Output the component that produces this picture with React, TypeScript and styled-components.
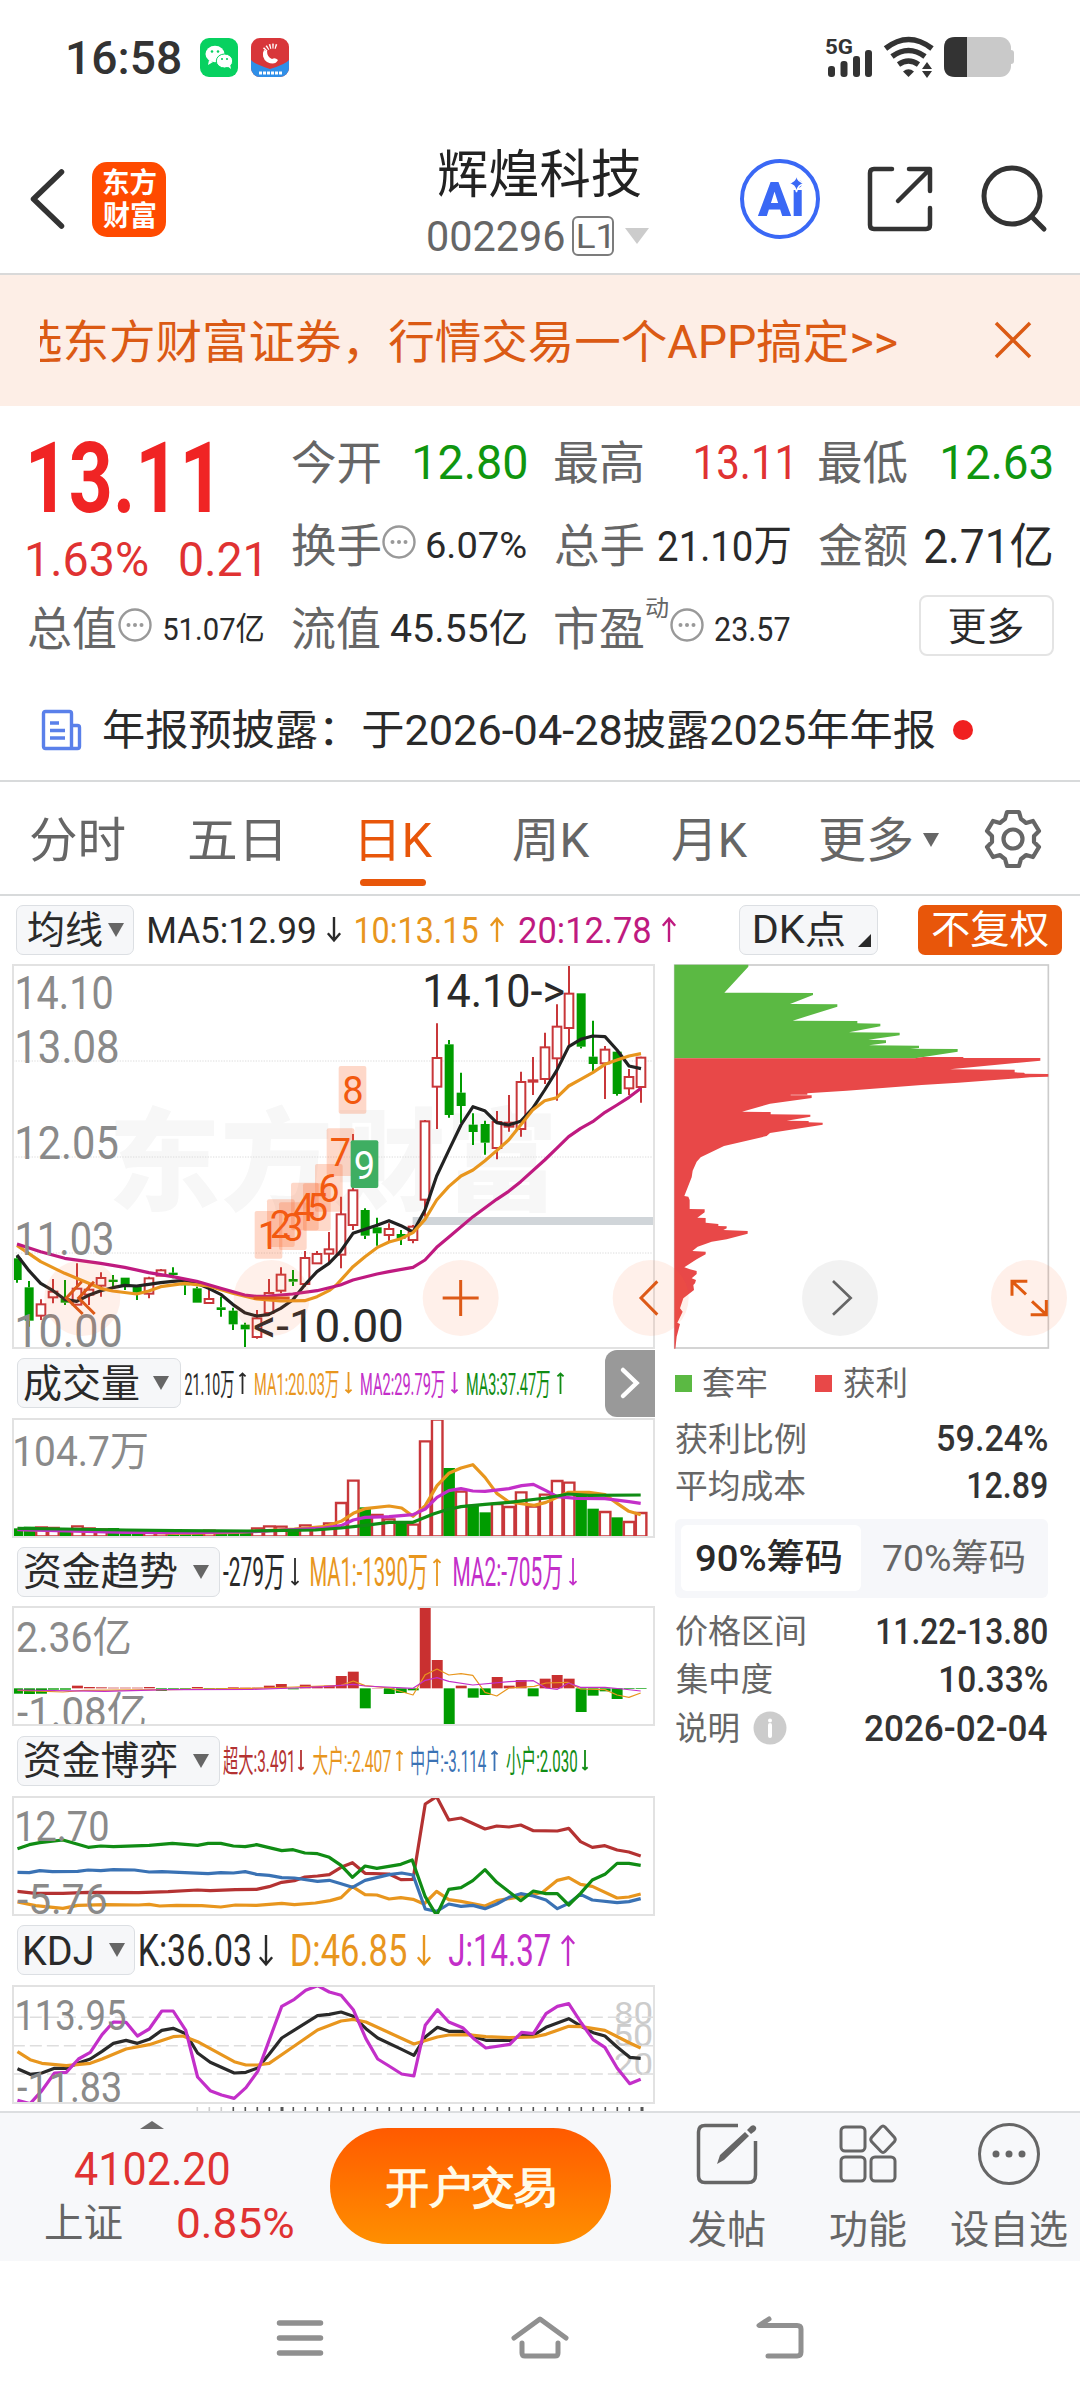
import React, { useLayoutEffect, useRef, useState } from 'react';
import styled, { createGlobalStyle } from 'styled-components';

const FONT = "Roboto, 'Noto Sans CJK SC', sans-serif";
const RED = '#c8373a';
const GREEN = '#009c00';
const ORANGE = '#e8961e';
const PURPLE = '#c32fc9';
const MAGENTA = '#bf1a80';
const INK = '#2a2a2a';
const GREY = '#666';

const Global = createGlobalStyle`
  * { box-sizing: border-box; }
  body { margin: 0; background: #fff; font-family: ${FONT}; }
  svg { display: block; flex: none; overflow: visible; }
`;

/* ---------- text set to a fixed ink width ---------- */
const FitBox = styled.span<{ $w: number; $size: number; $color: string; $weight: number; $ml: number }>`
  display: inline-block;
  flex: none;
  width: ${p => p.$w}px;
  margin-left: ${p => p.$ml}px;
  font-size: ${p => p.$size}px;
  line-height: 1.2;
  height: 1.2em;
  font-weight: ${p => p.$weight};
  color: ${p => p.$color};
  white-space: nowrap;
`;
const FitInner = styled.span`
  display: inline-block;
  transform-origin: 0 50%;
`;

type FitProps = { w: number; size: number; color?: string; weight?: number; ml?: number; children: string };
function Fit({ w, size, color = INK, weight = 400, ml = 0, children }: FitProps) {
  const ref = useRef<HTMLSpanElement>(null);
  const [fit, setFit] = useState({ scale: 1, left: 0 });
  useLayoutEffect(() => {
    const ctx = document.createElement('canvas').getContext('2d');
    if (!ctx || !ref.current) return;
    ctx.font = `${weight} ${size}px ${FONT}`;
    const m = ctx.measureText(children);
    const laidOut = parseFloat(getComputedStyle(ref.current).width) || m.width;
    const ink = m.actualBoundingBoxLeft + m.actualBoundingBoxRight + laidOut - m.width;
    const scale = w / ink;
    setFit({ scale, left: m.actualBoundingBoxLeft * scale });
  }, [w, size, weight, children]);
  return (
    <FitBox $w={w} $size={size} $color={color} $weight={weight} $ml={ml}>
      <FitInner ref={ref} style={{ transform: `translate(${fit.left}px, 1px) scaleX(${fit.scale})` }}>{children}</FitInner>
    </FitBox>
  );
}

/* ---------- page ---------- */
const Page = styled.div`
  width: 1080px;
  height: 2400px;
  display: flex;
  flex-direction: column;
  overflow: hidden;
  background: #fff;
`;

const StatusBar = styled.div`
  height: 115px;
  padding: 0 66px 0 68px;
  display: flex;
  align-items: center;
`;
const Spacer = styled.div`flex: 1;`;
const AppIcon = styled.div<{ $bg: string; $ml: number }>`
  width: 38px;
  height: 39px;
  margin-left: ${p => p.$ml}px;
  border-radius: 9px;
  background: ${p => p.$bg};
  overflow: hidden;
`;

const Header = styled.header`
  height: 158px;
  padding-left: 30px;
  display: flex;
  align-items: center;
`;
const BackIcon = styled.svg`margin-top: 11px;`;
const Logo = styled.div`
  width: 74px;
  height: 75px;
  margin: 11px 0 0 28px;
  border-radius: 15px;
  background: #ff4a00;
  display: flex;
  flex-direction: column;
  align-items: center;
  justify-content: center;
  gap: 0;
`;
const TitleBlock = styled.div`
  width: 222px;
  margin: 17px 0 0 262px;
  display: flex;
  flex-direction: column;
`;
const CodeRow = styled.div`
  display: flex;
  align-items: center;
  margin-top: 5px;
`;
const Level = styled.span`
  width: 42px;
  height: 40px;
  margin-left: 8px;
  border: 2px solid #7c7c7c;
  border-radius: 6px;
  display: flex;
  align-items: center;
  justify-content: center;
`;
const Down = styled.i<{ $w: number; $h: number; $c: string; $ml?: number }>`
  width: 0;
  height: 0;
  flex: none;
  margin-left: ${p => p.$ml ?? 0}px;
  border-left: ${p => p.$w / 2}px solid transparent;
  border-right: ${p => p.$w / 2}px solid transparent;
  border-top: ${p => p.$h}px solid ${p => p.$c};
`;
const Up = styled.i`
  width: 0;
  height: 0;
  margin-bottom: 12px;
  border-left: 12px solid transparent;
  border-right: 12px solid transparent;
  border-bottom: 8px solid #6c6c6c;
`;
const HeaderIcons = styled.div`
  display: flex;
  align-items: center;
  margin: 10px 0 0 90px;
`;
const AiBadge = styled.div`
  width: 80px;
  height: 80px;
  border: 4px solid #3a68f5;
  border-radius: 50%;
  display: flex;
  align-items: center;
  justify-content: center;
  position: relative;
`;
const Sparkle = styled.svg`
  position: absolute;
  right: 12px;
  top: 13px;
`;

const Banner = styled.div`
  height: 133px;
  border-top: 2px solid #d9d9d9;
  background: #fdeee6;
  padding: 0 49px 0 40px;
  display: flex;
  align-items: center;
  justify-content: space-between;
`;
const Marquee = styled.div`
  width: 860px;
  overflow: hidden;
  display: flex;
  justify-content: flex-end;
  padding: 2px 3px 0 0;
`;

const Quote = styled.section`
  height: 264px;
  padding: 15px 28px 0;
  display: grid;
  grid-template-columns: 264px 263px 264px 233px;
  grid-template-rows: repeat(3, 83px);
`;
const Price = styled.div`
  grid-row: span 2;
  display: flex;
  flex-direction: column;
`;
const PriceTop = styled.div`height: 113px; padding-left: 3px; display: flex; align-items: center;`;
const PriceSub = styled.div`height: 50px; display: flex; align-items: center;`;
const Cell = styled.div<{ $last?: boolean }>`
  padding-right: ${p => (p.$last ? 0 : 29)}px;
  display: flex;
  align-items: center;
  justify-content: space-between;
`;
const Lbl = styled.span`display: flex; align-items: center;`;
const Sup = styled.span`
  align-self: flex-start;
  margin-top: -7px;
  display: flex;
`;
const MoreButton = styled.button`
  width: 135px;
  height: 61px;
  margin: -5px -2px 0 auto;
  padding: 0;
  border: 2px solid #e4e4e4;
  border-radius: 8px;
  background: #fff;
  display: flex;
  align-items: center;
  justify-content: center;
`;
const DotsIcon = styled.svg`margin: 0 0 7px 2px;`;

const Notice = styled.div`
  height: 110px;
  padding: 10px 0 0 42px;
  display: flex;
  align-items: center;
`;
const RedDot = styled.i`
  width: 20px;
  height: 20px;
  margin-left: 18px;
  border-radius: 50%;
  background: #f02020;
`;

const Tabs = styled.nav`
  height: 116px;
  border-top: 2px solid #d8dadb;
  border-bottom: 2px solid #d8dadb;
  padding-left: 31px;
  display: flex;
  align-items: center;
`;
const Tab = styled.div<{ $ml: number; $on?: boolean }>`
  height: 100%;
  margin-left: ${p => p.$ml}px;
  display: flex;
  align-items: center;
  position: relative;
  padding-top: 4px;
  ${p => p.$on && `&::after { content: ''; position: absolute; left: -1px; bottom: 8px; width: 66px; height: 7px; border-radius: 4px; background: #e8560a; }`}
`;

const MaRow = styled.div`
  height: 68px;
  padding-left: 16px;
  display: flex;
  align-items: center;
`;
const Chip = styled.div<{ $w: number; $pl: number; $ml?: number }>`
  width: ${p => p.$w}px;
  height: 50px;
  flex: none;
  margin-left: ${p => p.$ml ?? 0}px;
  padding-left: ${p => p.$pl}px;
  border: 1px solid #dcdfe3;
  border-radius: 7px;
  background: #f6f7f9;
  display: flex;
  align-items: center;
`;
const Corner = styled.i`
  width: 0;
  height: 0;
  margin: 22px 0 0 13px;
  border-left: 13px solid transparent;
  border-bottom: 13px solid ${INK};
`;
const Adjust = styled.div`
  width: 144px;
  height: 50px;
  margin-left: 40px;
  border-radius: 7px;
  background: #e8560a;
  display: flex;
  align-items: center;
  justify-content: center;
`;

const Main = styled.main`
  height: 1148px;
  display: flex;
  padding-left: 12px;
`;
const Left = styled.div`width: 643px; display: flex; flex-direction: column;`;
const Right = styled.div`width: 375px; margin-left: 19px; display: flex; flex-direction: column;`;

const Panel = styled.div<{ $h: number }>`
  height: ${p => p.$h}px;
  border: 2px solid #e2e2e2;
  position: relative;
  overflow: hidden;
`;
const Plot = styled.svg`
  position: absolute;
  left: -2px;
  top: -2px;
`;
const Mark = styled.div<{ $x: number; $y: number }>`
  position: absolute;
  left: ${p => p.$x}px;
  top: ${p => p.$y}px;
  display: flex;
`;
const Legend = styled.div<{ $h: number }>`
  height: ${p => p.$h}px;
  padding-left: 5px;
  display: flex;
  align-items: center;
  position: relative;
`;
const ExpandTab = styled.div`
  position: absolute;
  right: 0;
  top: 1px;
  width: 50px;
  height: 67px;
  border-radius: 12px 0 0 12px;
  background: #999;
  display: flex;
  align-items: center;
  justify-content: center;
`;

const KeyRow = styled.div`height: 69px; display: flex; align-items: center;`;
const Swatch = styled.i<{ $c: string; $ml?: number }>`
  width: 17px;
  height: 17px;
  margin-left: ${p => p.$ml ?? 0}px;
  background: ${p => p.$c};
`;
const Stat = styled.div<{ $h: number }>`
  height: ${p => p.$h}px;
  padding: 0 2px 0 2px;
  display: flex;
  align-items: center;
  justify-content: space-between;
`;
const Segment = styled.div`
  width: 373px;
  height: 79px;
  margin: 7px 0 10px 1px;
  padding: 6px;
  border-radius: 6px;
  background: #f6f7fa;
  display: flex;
`;
const SegItem = styled.div<{ $on?: boolean }>`
  width: 180px;
  height: 66px;
  padding: ${p => (p.$on ? '2px 6px 0 0' : '2px 0 0 4px')};
  border-radius: 6px;
  background: ${p => (p.$on ? '#fff' : 'transparent')};
  display: flex;
  align-items: center;
  justify-content: center;
`;

const Dock = styled.footer`
  height: 150px;
  border-top: 2px solid #dcdee0;
  background: #f7f8fa;
  display: flex;
`;
const IndexBox = styled.div`
  width: 330px;
  padding: 8px 0 0;
  display: flex;
  flex-direction: column;
`;
const IndexTop = styled.div`width: 304px; display: flex; flex-direction: column; align-items: center;`;
const IndexRow = styled.div`display: flex; align-items: center; padding-left: 46px; margin-top: 1px;`;
const Trade = styled.button`
  width: 281px;
  height: 116px;
  margin-top: 15px;
  padding: 3px 0 0;
  border: 0;
  border-radius: 58px;
  background: linear-gradient(#ff5a00, #ff8f00);
  display: flex;
  align-items: center;
  justify-content: center;
`;
const Action = styled.div<{ $w: number; $ml: number }>`
  width: ${p => p.$w}px;
  margin-left: ${p => p.$ml}px;
  padding-top: 10px;
  display: flex;
  flex-direction: column;
  align-items: center;
  gap: 21px;
`;
const SystemNav = styled.div`
  height: 139px;
  padding: 14px 0 0 277px;
  display: flex;
  align-items: center;
`;
const NavIcon = styled.svg<{ $ml: number }>`margin-left: ${p => p.$ml}px;`;

/* ---------- small drawings ---------- */
function Arrow({ up, w = 15, h = 25, c, ml }: { up?: boolean; w?: number; h?: number; c: string; ml: number }) {
  return (
    <svg width={w + ml} height={h} viewBox={`${-ml} 0 ${w + ml} ${h}`}>
      <g transform={up ? '' : `translate(0 ${h}) scale(1 -1)`} fill="none" stroke={c} strokeWidth={w < 10 ? 1.8 : 2.4}>
        <path d={`M${w / 2} ${h}V1M${w * 0.06} ${w * 0.62}L${w / 2} 1.5L${w * 0.94} ${w * 0.62}`} />
      </g>
    </svg>
  );
}
const Dots = () => (
  <DotsIcon width="34" height="34" viewBox="0 0 34 34">
    <circle cx="17" cy="17" r="15.5" fill="none" stroke="#999" strokeWidth="2.4" />
    {[10.5, 17, 23.5].map(x => <circle key={x} cx={x} cy="17" r="2" fill="#999" />)}
  </DotsIcon>
);

/* ---------- chart data ---------- */
type Candle = [string, number, number, number, number];
const candles: Candle[] = [
  ['g', 918, 925, 990, 998], ['g', 993, 1012, 1112, 1130], ['r', 1048, 1062, 1098, 1110], ['r', 987, 1024, 1043, 1060],
  ['g', 990, 1045, 1058, 1065], ['r', 940, 1015, 1065, 1065], ['r', 1000, 1018, 1035, 1065], ['r', 967, 983, 1008, 1040],
  ['g', 975, 989, 996, 1012], ['g', 983, 983, 1010, 1020], ['g', 1008, 1008, 1028, 1050], ['r', 980, 984, 1032, 1045],
  ['r', 957, 960, 978, 978], ['g', 952, 968, 975, 985], ['g', 1000, 1000, 1006, 1035], ['g', 1010, 1015, 1058, 1058],
  ['r', 1015, 1046, 1060, 1060], ['g', 1040, 1072, 1080, 1100], ['g', 1073, 1082, 1123, 1140], ['g', 1118, 1124, 1138, 1196],
  ['r', 1080, 1104, 1162, 1166], ['r', 987, 1028, 1090, 1098], ['r', 952, 973, 1023, 1030], ['g', 960, 987, 995, 1008],
  ['r', 903, 923, 1003, 1010], ['r', 903, 911, 941, 941], ['r', 846, 897, 912, 940], ['r', 740, 792, 915, 955],
  ['r', 552, 720, 826, 840], ['g', 775, 780, 857, 867], ['g', 803, 832, 850, 887], ['r', 820, 836, 856, 873],
  ['g', 840, 852, 866, 885], ['r', 825, 829, 871, 880], ['r', 510, 513, 750, 800], ['r', 220, 323, 411, 537],
  ['g', 270, 283, 495, 503], ['g', 368, 428, 468, 520], ['g', 490, 524, 546, 585], ['g', 512, 522, 578, 614],
  ['r', 483, 515, 595, 628], ['r', 435, 517, 531, 545], ['r', 365, 395, 538, 560], ['r', 321, 390, 396, 435],
  ['r', 248, 291, 388, 402], ['r', 163, 229, 326, 452], ['r', 44, 130, 235, 285], ['g', 130, 130, 290, 295],
  ['g', 212, 320, 342, 368], ['r', 288, 298, 341, 447], ['g', 305, 305, 432, 437], ['r', 357, 380, 416, 435], ['r', 320, 322, 412, 458],
];
const ma5 = '52,915 88,962 123,1000 160,1022 195,1048 231,1054 267,1036 303,1022 339,1013 375,1006 411,1008 447,1003 483,998 519,994 555,991 591,1000 627,1015 663,1033 699,1063 735,1088 771,1098 806,1094 843,1075 879,1050 915,1005 952,965 988,940 1022,905 1060,850 1096,838 1132,826 1168,812 1204,827 1240,846 1276,780 1311,678 1347,602 1384,525 1420,470 1455,482 1491,518 1527,525 1563,514 1599,475 1635,420 1671,362 1707,290 1743,268 1779,258 1816,260 1852,300 1888,348 1924,356';
const ma10 = '52,886 123,935 195,970 267,1000 303,1015 339,1023 411,1032 447,1023 483,1010 555,1000 627,1008 699,1030 771,1047 843,1053 915,1052 952,1040 988,1022 1010,1005 1022,992 1060,950 1096,920 1132,893 1168,876 1204,866 1240,848 1276,808 1311,750 1347,710 1384,678 1420,660 1455,633 1491,602 1527,570 1563,525 1599,480 1635,452 1671,443 1707,408 1743,388 1779,368 1816,343 1852,330 1888,318 1924,311';
const ma20 = '52,882 123,905 195,925 303,940 375,952 447,968 519,980 591,994 663,1015 735,1035 771,1039 806,1038 879,1032 952,1022 1022,1005 1060,990 1132,972 1168,965 1240,952 1276,930 1311,892 1347,862 1420,800 1491,748 1527,724 1563,695 1635,630 1671,595 1707,560 1743,535 1779,515 1816,487 1852,465 1888,442 1924,415';
const counts: [string, number, number, number, number][] = [
  ['1', 765, 783, 806, 855], ['2', 802, 748, 842, 823], ['3', 838, 757, 880, 833], ['4', 874, 698, 913, 772],
  ['5', 910, 700, 953, 772], ['6', 946, 642, 988, 715], ['7', 981, 535, 1022, 608], ['8', 1017, 348, 1060, 420], ['9', 1053, 571, 1094, 645],
];
const volume = 'g533 g528 r530 r532 g540 r527 r533 r536 g532 g540 g540 r540 r540 g540 g545 g548 r540 g545 g545 g542 r533 r527 r528 g533 r524 r535 r518 r457 r390 g470 r493 r506 g512 r522 r272 r207 g352 r423 g462 g485 r460 r469 r425 r468 r432 r391 r396 g430 g474 r484 g500 r514 r487'.split(' ');
const flow = 'g342 g343 g342 g330 g330 r318 r322 r323 r324 r324 r324 r322 g334 g328 g328 r322 g331 g331 r323 r324 r324 r318 r313 g329 r315 r320 r318 r289 r276 g386 r325 g343 g340 g332 r81 r241 g437 r318 g354 g346 r292 r318 r301 g350 r297 r286 r297 g397 g348 g335 g358 g328 g328'.split(' ');
const volLines: [string, string][] = [
  [ORANGE, '42,536 300,543 420,548 560,545 700,535 770,528 811,512 840,488 868,474 925,466 955,472 982,497 1011,465 1039,405 1067,368 1096,352 1124,342 1153,380 1181,428 1210,454 1270,464 1298,455 1350,425 1400,425 1438,432 1467,458 1495,482 1523,492'],
  [PURPLE, '42,537 300,545 450,546 600,543 770,532 811,525 840,508 868,500 925,498 982,492 1011,475 1039,440 1067,420 1096,414 1124,421 1153,422 1210,414 1240,405 1268,401 1298,420 1325,438 1370,443 1438,444 1495,453 1523,458'],
  ['#108c14', '42,533 150,535 300,538 420,540 600,541 750,538 811,532 868,524 925,515 982,515 1030,490 1060,478 1096,468 1153,461 1210,455 1298,442 1350,430 1400,434 1523,433'],
];
const flowLines: [string, string][] = [
  [ORANGE, '42,332 150,337 200,332 400,330 600,326 700,322 811,317 840,304 868,318 925,325 982,346 1011,285 1039,268 1067,286 1096,282 1124,287 1153,338 1181,349 1210,325 1270,320 1298,310 1350,308 1380,328 1438,330 1467,346 1495,353 1523,340'],
  [PURPLE, '42,331 250,335 400,330 600,329 700,325 770,321 840,314 868,319 982,326 1011,302 1039,294 1067,305 1124,316 1210,306 1268,303 1298,325 1325,329 1352,310 1380,323 1438,323 1480,328 1523,334'],
];
const gameLines: [string, string][] = [
  ['#b43232', '42,452 85,458 150,458 210,455 330,456 400,453 470,448 500,450 560,447 610,446 640,438 670,425 700,420 725,409 755,406 783,402 811,380 838,366 868,398 925,400 953,417 982,416 1011,190 1038,168 1067,238 1096,232 1153,265 1181,256 1210,259 1238,253 1268,270 1325,271 1352,263 1380,303 1408,320 1438,315 1467,328 1495,334 1523,346'],
  [ORANGE, '42,484 85,495 150,503 185,494 250,492 330,493 355,491 380,496 420,494 480,495 525,499 560,493 610,494 670,488 700,492 750,487 785,480 811,471 838,438 868,462 896,463 925,475 953,471 982,476 1008,490 1038,452 1067,477 1096,482 1153,496 1181,480 1238,468 1290,455 1325,419 1352,411 1380,431 1408,437 1467,472 1495,469 1523,460'],
  ['#3a72b4', '42,395 70,396 95,390 125,393 185,392 210,388 240,390 270,387 320,388 355,394 385,393 495,399 525,396 555,397 583,393 610,401 640,404 670,411 700,412 755,422 783,419 811,429 838,440 868,419 925,402 955,397 982,403 1011,505 1038,512 1067,490 1096,497 1124,494 1153,504 1181,490 1210,470 1238,459 1268,466 1298,478 1325,504 1352,488 1380,461 1408,478 1467,486 1495,483 1523,474'],
  ['#108c14', '42,324 70,312 95,306 150,298 210,320 240,316 270,318 355,314 410,308 470,314 495,308 525,308 555,316 583,318 610,312 640,321 670,330 697,327 725,337 755,339 783,350 811,374 838,410 868,376 896,383 953,371 980,358 1011,468 1038,524 1067,446 1096,441 1124,420 1153,387 1181,425 1238,480 1268,451 1298,459 1325,459 1352,493 1380,458 1408,418 1438,401 1467,368 1495,368 1523,374'],
];
const kdjLines: [string, string][] = [
  [INK, '42,445 72,462 100,458 130,444 158,444 187,428 215,416 243,393 270,369 300,360 327,369 355,357 385,330 412,324 442,340 470,398 500,426 557,458 585,456 613,443 640,402 670,353 755,286 783,282 811,275 840,288 870,325 898,353 955,387 984,405 1011,350 1040,321 1067,333 1100,333 1128,350 1155,360 1212,360 1240,345 1268,345 1298,321 1352,295 1382,318 1410,337 1438,347 1467,380 1497,411 1523,414'],
  [ORANGE, '42,394 72,418 100,429 158,436 215,429 243,416 300,386 355,373 412,349 435,347 470,364 557,424 585,434 613,434 640,429 700,377 755,329 811,302 840,297 870,305 927,338 984,371 1040,350 1067,344 1110,343 1155,349 1210,352 1268,350 1298,342 1352,318 1382,319 1438,330 1497,368 1523,383'],
  [PURPLE, '42,540 72,550 100,511 130,458 158,456 187,416 215,396 243,343 270,305 300,306 327,347 355,326 385,272 412,272 442,330 470,470 500,511 527,524 557,534 585,502 613,453 640,360 670,258 700,237 727,210 755,196 783,215 811,225 840,268 870,355 898,416 925,437 955,461 984,467 1011,315 1040,268 1067,305 1100,322 1128,357 1155,383 1212,372 1240,336 1268,340 1298,280 1325,258 1352,250 1382,308 1410,358 1438,381 1467,443 1497,490 1523,477'],
];
const trapped = '43,44 265,44 265,50 193,128 459,129 459,135 390,162 532,163 532,170 398,212 592,213 592,220 661,221 661,229 567,247 719,248 719,256 625,269 678,271 678,279 627,286 777,287 777,294 750,296 893,297 893,305 790,321 765,325 43,325';
const profit = '43,325 765,325 790,321 910,321 910,324 1141,324 1141,332 870,358 1064,359 1064,367 1092,368 1095,371 1165,372 1165,380 1110,382 895,398 785,405 560,422 442,430 442,434 392,434 392,436 455,436 455,444 330,461 246,485 332,486 332,493 451,494 451,500 380,512 446,513 446,517 488,518 488,524 330,549 320,558 192,588 122,622 110,635 98,662 95,682 73,738 85,740 89,750 89,777 134,778 134,787 112,803 137,804 137,818 175,822 175,828 200,829 200,835 190,840 263,843 263,851 200,868 155,875 113,890 97,903 137,905 137,913 110,928 73,952 90,958 110,963 110,972 95,985 108,990 105,1000 100,1005 102,1020 70,1045 60,1075 68,1085 52,1118 60,1122 50,1160 46,1196 43,1196';

/* ---------- charts ---------- */
function CandleChart() {
  return (
    <Plot width="643" height="385" viewBox="37 42 1929 1155">
      <text x="325" y="755" fontSize="335" fontWeight="900" fill="#f7f7f7" textLength="1350" lengthAdjust="spacingAndGlyphs" fontFamily={FONT}>东方财富</text>
      {[333, 621, 909].map(y => <path key={y} d={`M40 ${y}H1963`} stroke="#dcdcdc" strokeWidth="3" strokeDasharray="4 4" />)}
      <rect x="1239" y="801" width="724" height="24" fill="#d0d5d9" />
      {candles.map(([k, h, t, b, l], i) => {
        const x = 52 + 36 * i;
        const up = k === 'r';
        return (
          <g key={i} stroke={up ? RED : GREEN} strokeWidth="6">
            <path d={`M${x} ${h}V${t}M${x} ${b}V${l}`} />
            {up
              ? <rect x={x - 13} y={t + 1} width="26" height={Math.max(2, b - t - 2)} fill="#fff" strokeWidth="6" />
              : <rect x={x - 13} y={t} width="27" height={b - t} fill={GREEN} stroke="none" />}
          </g>
        );
      })}
      <g fill="none" strokeWidth="9.5" strokeLinejoin="round">
        <polyline points={ma5} stroke="#222" />
        <polyline points={ma10} stroke={ORANGE} />
        <polyline points={ma20} stroke={MAGENTA} />
      </g>
      {counts.map(([n, x, y, cx, cy]) => (
        <g key={n}>
          <rect x={x} y={y} width="83" height="143" rx="6" fill={n === '9' ? '#3fae62' : 'rgba(250,100,40,.25)'} />
          <text x={cx} y={cy + 41} fontSize="114" textAnchor="middle" fill={n === '9' ? '#fff' : '#f2590f'} fontFamily={FONT}>{n}</text>
        </g>
      ))}
    </Plot>
  );
}

const Overlay = styled.svg`
  position: absolute;
  left: 0;
  top: 0;
  pointer-events: none;
`;
const ChartWrap = styled.div`position: relative; height: 385px;`;

function ChartControls() {
  return (
    <Overlay width="643" height="385" viewBox="37 42 1929 1155">
      {[248, 816, 1383, 1953].map(x => <circle key={x} cx={x} cy="1044" r="114" fill="rgba(255,110,50,.1)" />)}
      <g fill="none" stroke="#dd5a18" strokeWidth="9">
        <path d="M246 995L200 1044L249 1092M283 995L237 1044L285 1092" />
        <path d="M762 1044H870M1329 1044H1437M1383 990V1098M1973 994L1924 1044L1973 1094" />
      </g>
    </Overlay>
  );
}

function Lines({ data, w = 3.2 }: { data: [string, string][]; w?: number }) {
  return (
    <g fill="none" strokeWidth={w} strokeLinejoin="round">
      {data.map(([c, p]) => <polyline key={c} points={p} stroke={c} vectorEffect="non-scaling-stroke" />)}
    </g>
  );
}

function Ticks() {
  return (
    <svg width="643" height="7" viewBox="0 0 643 7">
      {Array.from({ length: 38 }, (_, k) => k + 15).map(i => (
        <rect key={i} x={4.5 + 12 * i} y="3" width={i === 22 || i === 52 ? 3 : 1.6} height="4" fill={i < 18 ? '#ccc' : '#555'} />
      ))}
    </svg>
  );
}

export default function App() {
  return (
    <Page>
      <Global />
      <StatusBar>
        <Fit w={112} size={46} weight={500} color="#333">16:58</Fit>
        <AppIcon $bg="#07d160" $ml={20}>
          <svg width="38" height="39" viewBox="0 0 38 39">
            <ellipse cx="15" cy="16" rx="9.5" ry="8.3" fill="#fff" /><path d="M9 22l-1 5 5-3z" fill="#fff" />
            <circle cx="12" cy="13.5" r="1.3" fill="#07d160" /><circle cx="18" cy="13.5" r="1.3" fill="#07d160" />
            <ellipse cx="24.5" cy="23" rx="8.2" ry="7" fill="#fff" stroke="#07d160" strokeWidth="1" /><path d="M27 28l4 3-1-5z" fill="#fff" />
            <circle cx="22" cy="21" r="1.1" fill="#07d160" /><circle cx="27" cy="21" r="1.1" fill="#07d160" />
          </svg>
        </AppIcon>
        <AppIcon $bg="#d8363a" $ml={13}>
          <svg width="38" height="39" viewBox="0 0 38 39">
            <path d="M0 22Q3 26 19 31Q35 26 38 22V39H0z" fill="#2f8fe8" />
            <path d="M13 12A9 9 0 0 0 16 24Q24 28 27 22Q24 19 21 21Q16 19 16 13z" fill="#fff" />
            <path d="M14 12A10 10 0 0 1 26 9" fill="none" stroke="#fff" strokeWidth="5" strokeDasharray="1.3 1.5" />
            <path d="M8 35H31" stroke="#fff" strokeWidth="3" strokeDasharray="3 1" />
          </svg>
        </AppIcon>
        <Spacer />
        <svg width="188" height="40" viewBox="826 37 188 40">
          <text x="825" y="53.5" fontSize="20" fontWeight="700" fill="#333" textLength="28" lengthAdjust="spacingAndGlyphs" fontFamily={FONT}>5G</text>
          <g fill="#333">
            <rect x="828" y="66" width="7" height="11" rx="3" /><rect x="840.5" y="61" width="7" height="16" rx="3" />
            <rect x="853" y="56" width="7" height="21" rx="3" /><rect x="865" y="50" width="7" height="27" rx="3" />
            <path d="M903 71.500Q908.500 67 914 71.500L908.500 77z" />
            <path d="M922 69L927 62L932 69zM922 71L927 78L932 71z" />
          </g>
          <g fill="none" stroke="#333" strokeWidth="5.500">
            <path d="M885.500 48.500Q908.500 30.500 932 48.500" /><path d="M892 56.500Q908.500 44.500 925 56.500" /><path d="M898.500 64.500Q908.500 57.500 918.500 64.500" />
          </g>
          <rect x="944" y="37" width="67" height="40" rx="11" fill="#c9c9c9" />
          <path d="M967 37H955Q944 37 944 48V66Q944 77 955 77H967z" fill="#333" />
          <path d="M1011 50Q1014 50 1014 53V61Q1014 64 1011 64z" fill="#c9c9c9" />
        </svg>
      </StatusBar>

      <Header>
        <BackIcon width="34" height="60" viewBox="0 0 34 60"><path d="M31.500 3L3.500 30L31.500 57" fill="none" stroke="#333" strokeWidth="5.500" strokeLinecap="round" strokeLinejoin="round" /></BackIcon>
        <Logo>
          <Fit w={53} size={28} weight={700} color="#fff">东方</Fit>
          <Fit w={53} size={28} weight={700} color="#fff">财富</Fit>
        </Logo>
        <TitleBlock>
          <Fit w={203} size={52} ml={10} color="#222">辉煌科技</Fit>
          <CodeRow>
            <Fit w={136} size={42} color={GREY}>002296</Fit>
            <Level><Fit w={31} size={33} color={GREY}>L1</Fit></Level>
            <Down $w={24} $h={16} $c="#ccc" $ml={11} />
          </CodeRow>
        </TitleBlock>
        <HeaderIcons>
          <AiBadge>
            <Fit w={46} size={49} weight={900} color="#3a68f5">Ai</Fit>
            <Sparkle width="15" height="15" viewBox="0 0 14 14"><path d="M7 -1Q8 6 15 7Q8 8 7 15Q6 8 -1 7Q6 6 7 -1z" fill="#3a68f5" stroke="#fff" strokeWidth="1.2" /></Sparkle>
          </AiBadge>
          <NavIcon $ml={47} width="66" height="66" viewBox="0 0 66 66">
            <g fill="none" stroke="#333" strokeWidth="4.500" strokeLinecap="round" strokeLinejoin="round">
              <path d="M25 3H7Q3 3 3 7V59Q3 63 7 63H59Q63 63 63 59V42M42 3H63V25M62 4L31 35" />
            </g>
          </NavIcon>
          <NavIcon $ml={49} width="66" height="68" viewBox="0 0 66 68">
            <g fill="none" stroke="#333" strokeWidth="5" strokeLinecap="round"><circle cx="30" cy="31" r="28" /><path d="M50 52L62 64" /></g>
          </NavIcon>
        </HeaderIcons>
      </Header>

      <Banner>
        <Marquee><Fit w={879} size={46} color="#db5a14">选东方财富证券，行情交易一个APP搞定&gt;&gt;</Fit></Marquee>
        <svg width="36" height="36" viewBox="0 0 36 36"><path d="M1 1L35 35M35 1L1 35" stroke="#db5a14" strokeWidth="3.5" /></svg>
      </Banner>

      <Quote>
        <Price>
          <PriceTop><Fit w={179} size={98} weight={700} color="#f02424">13.11</Fit></PriceTop>
          <PriceSub><Fit w={120} size={48} color="#e03232">1.63%</Fit><Fit w={80} size={48} ml={32} color="#e03232">0.21</Fit></PriceSub>
        </Price>
        <Cell><Fit w={88} size={46} color={GREY}>今开</Fit><Fit w={111} size={49} color="#0f960f">12.80</Fit></Cell>
        <Cell><Fit w={88} size={46} color={GREY}>最高</Fit><Fit w={94} size={49} color="#e03232">13.11</Fit></Cell>
        <Cell $last><Fit w={88} size={46} color={GREY}>最低</Fit><Fit w={109} size={49} color="#0f960f">12.63</Fit></Cell>
        <Cell><Lbl><Fit w={88} size={46} color={GREY}>换手</Fit><Dots /></Lbl><Fit w={99} size={37}>6.07%</Fit></Cell>
        <Cell><Fit w={88} size={46} color={GREY}>总手</Fit><Fit w={132} size={43}>21.10万</Fit></Cell>
        <Cell $last><Fit w={88} size={46} color={GREY}>金额</Fit><Fit w={127} size={48}>2.71亿</Fit></Cell>
        <Cell><Lbl><Fit w={88} size={46} color={GREY}>总值</Fit><Dots /></Lbl><Fit w={99} size={32}>51.07亿</Fit></Cell>
        <Cell><Fit w={88} size={46} color={GREY}>流值</Fit><Fit w={135} size={39}>45.55亿</Fit></Cell>
        <Cell><Lbl><Fit w={88} size={46} color={GREY}>市盈</Fit><Sup><Fit w={22} size={23} ml={3} color={GREY}>动</Fit></Sup><Dots /></Lbl><Fit w={75} size={33}>23.57</Fit></Cell>
        <Cell $last><MoreButton><Fit w={75} size={39}>更多</Fit></MoreButton></Cell>
      </Quote>

      <Notice>
        <svg width="39" height="40" viewBox="0 0 39 40">
          <g fill="none" stroke="#5a80ea" strokeWidth="3.4"><path d="M1.500 3.500Q1.500 1.500 3.500 1.500H27.500Q29.500 1.500 29.500 3.500V38.500H3.500Q1.500 38.500 1.500 36.500zM29.500 15.500H35.500Q37.500 15.500 37.500 17.500V36.500Q37.500 38.500 35.500 38.500H29.500M8 13H17M8 20.500H23M8 28H23" /></g>
        </svg>
        <Fit w={831} size={42} ml={23}>年报预披露：于2026-04-28披露2025年年报</Fit>
        <RedDot />
      </Notice>

      <Tabs>
        <Tab $ml={0}><Fit w={94} size={48} color={GREY}>分时</Fit></Tab>
        <Tab $ml={64}><Fit w={91} size={48} color={GREY}>五日</Fit></Tab>
        <Tab $ml={81} $on><Fit w={72} size={48} color="#e8560a">日K</Fit></Tab>
        <Tab $ml={80}><Fit w={77} size={48} color={GREY}>周K</Fit></Tab>
        <Tab $ml={82}><Fit w={76} size={48} color={GREY}>月K</Fit></Tab>
        <Tab $ml={72}><Fit w={92} size={48} color={GREY}>更多</Fit><Down $w={17} $h={14} $c={GREY} $ml={11} /></Tab>
        <Tab $ml={46}>
          <svg width="56" height="58" viewBox="-28 -28 56 58">
            <g fill="none" stroke={GREY} strokeWidth="4.2" strokeLinejoin="round">
              <path d="M-6 -27H6L8 -20Q11 -18 13 -16L20 -18L26 -8L21 -3V3L26 8L20 18L13 16Q11 18 8 20L6 27H-6L-8 20Q-11 18 -13 16L-20 18L-26 8L-21 3V-3L-26 -8L-20 -18L-13 -16Q-11 -18 -8 -20z" />
              <circle r="9.500" />
            </g>
          </svg>
        </Tab>
      </Tabs>

      <MaRow>
        <Chip $w={118} $pl={11}><Fit w={74} size={38}>均线</Fit><Down $w={16} $h={14} $c={GREY} $ml={6} /></Chip>
        <Fit w={166} size={37} ml={15}>MA5:12.99</Fit><Arrow w={14} c={INK} ml={12} />
        <Fit w={122} size={37} ml={15} color={ORANGE}>10:13.15</Fit><Arrow up w={14} c={ORANGE} ml={12} />
        <Fit w={131} size={37} ml={15} color={MAGENTA}>20:12.78</Fit><Arrow up w={14} c={MAGENTA} ml={12} />
        <Chip $w={139} $pl={15} $ml={63}><Fit w={90} size={38}>DK点</Fit><Corner /></Chip>
        <Adjust><Fit w={116} size={39} color="#fff">不复权</Fit></Adjust>
      </MaRow>

      <Main>
        <Left>
          <ChartWrap>
            <Panel $h={385}>
              <CandleChart />
              <Mark $x={3} $y={-1}><Fit w={95} size={46} color="#8a8a8a">14.10</Fit></Mark>
              <Mark $x={3} $y={53}><Fit w={101} size={46} color="#8a8a8a">13.08</Fit></Mark>
              <Mark $x={3} $y={149}><Fit w={101} size={46} color="#8a8a8a">12.05</Fit></Mark>
              <Mark $x={3} $y={245}><Fit w={95} size={46} color="#8a8a8a">11.03</Fit></Mark>
              <Mark $x={3} $y={337}><Fit w={104} size={46} color="#8a8a8a">10.00</Fit></Mark>
              <Mark $x={411} $y={-3}><Fit w={139} size={46}>14.10-&gt;</Fit></Mark>
              <Mark $x={240} $y={332}><Fit w={148} size={46}>&lt;-10.00</Fit></Mark>
            </Panel>
            <ChartControls />
          </ChartWrap>

          <Legend $h={69}>
            <Chip $w={164} $pl={6}><Fit w={115} size={39}>成交量</Fit><Down $w={17} $h={14} $c={GREY} $ml={14} /></Chip>
            <Fit w={49} size={31} ml={4}>21.10万</Fit><Arrow up w={7} h={22} c={INK} ml={5} />
            <Fit w={84} size={31} ml={9} color={ORANGE}>MA1:20.03万</Fit><Arrow w={7} h={22} c={ORANGE} ml={6} />
            <Fit w={84} size={31} ml={9} color={PURPLE}>MA2:29.79万</Fit><Arrow w={7} h={22} c={PURPLE} ml={6} />
            <Fit w={83} size={31} ml={9} color="#108c14">MA3:37.47万</Fit><Arrow up w={7} h={22} c="#108c14" ml={7} />
            <ExpandTab><svg width="18" height="30" viewBox="0 0 18 30"><path d="M2 2L15.500 15L2 28" fill="none" stroke="#fff" strokeWidth="4.5" strokeLinecap="round" /></svg></ExpandTab>
          </Legend>
          <Panel $h={120}>
            <Plot width="643" height="120" viewBox="29 202 1528 360" preserveAspectRatio="none">
              {volume.map((v, i) => {
                const x = 42 + 28.5 * i;
                const y = +v.slice(1);
                return v[0] === 'r'
                  ? <rect key={i} x={x - 12.500} y={y} width="25" height={557 - y} fill="#fff" stroke={RED} strokeWidth="2.400" vectorEffect="non-scaling-stroke" />
                  : <rect key={i} x={x - 13.500} y={y} width="27" height={559 - y} fill={GREEN} />;
              })}
              <Lines data={volLines} />
            </Plot>
            <Mark $x={1} $y={6}><Fit w={132} size={42} color="#8a8a8a">104.7万</Fit></Mark>
          </Panel>

          <Legend $h={68}>
            <Chip $w={203} $pl={6}><Fit w={153} size={39}>资金趋势</Fit><Down $w={16} $h={14} $c={GREY} $ml={16} /></Chip>
            <Fit w={61} size={40} ml={3}>-279万</Fit><Arrow w={8} h={28} c={INK} ml={7} />
            <Fit w={116} size={40} ml={12} color={ORANGE}>MA1:-1390万</Fit><Arrow up w={8} h={28} c={ORANGE} ml={6} />
            <Fit w={108} size={40} ml={13} color={PURPLE}>MA2:-705万</Fit><Arrow w={8} h={28} c={PURPLE} ml={7} />
          </Legend>
          <Panel $h={120}>
            <Plot width="643" height="120" viewBox="29 79 1528 360" preserveAspectRatio="none">
              {flow.map((v, i) => {
                const x = 42 + 28.5 * i;
                const y = +v.slice(1);
                return <rect key={i} x={x - 13} y={Math.min(y, 326)} width="26" height={Math.abs(326 - y)} fill={v[0] === 'r' ? '#c93030' : GREEN} />;
              })}
              <Lines data={flowLines} w={1.2} />
            </Plot>
            <Mark $x={3} $y={4}><Fit w={113} size={42} color="#8a8a8a">2.36亿</Fit></Mark>
            <Mark $x={3} $y={79}><Fit w={128} size={42} color="#8a8a8a">-1.08亿</Fit></Mark>
          </Panel>

          <Legend $h={70}>
            <Chip $w={203} $pl={6}><Fit w={153} size={39}>资金博弈</Fit><Down $w={16} $h={14} $c={GREY} $ml={16} /></Chip>
            <Fit w={70} size={31} ml={3} color="#b43232">超大:3.491</Fit><Arrow w={6} h={21} c="#b43232" ml={5} />
            <Fit w={78} size={31} ml={9} color={ORANGE}>大户:-2.407</Fit><Arrow up w={7} h={21} c={ORANGE} ml={5} />
            <Fit w={75} size={31} ml={8} color="#3a72b4">中户:-3.114</Fit><Arrow up w={7} h={21} c="#3a72b4" ml={5} />
            <Fit w={71} size={31} ml={8} color="#108c14">小户:2.030</Fit><Arrow w={6} h={21} c="#108c14" ml={5} />
          </Legend>
          <Panel $h={120}>
            <Plot width="643" height="120" viewBox="29 166 1528 360" preserveAspectRatio="none"><Lines data={gameLines} /></Plot>
            <Mark $x={3} $y={3}><Fit w={91} size={42} color="#8a8a8a">12.70</Fit></Mark>
            <Mark $x={3} $y={76}><Fit w={89} size={42} color="#8a8a8a">-5.76</Fit></Mark>
          </Panel>

          <Legend $h={69}>
            <Chip $w={118} $pl={7}><Fit w={67} size={41}>KDJ</Fit><Down $w={16} $h={14} $c={GREY} $ml={17} /></Chip>
            <Fit w={110} size={44} ml={5}>K:36.03</Fit><Arrow w={14} h={31} c={INK} ml={9} />
            <Fit w={114} size={44} ml={19} color={ORANGE}>D:46.85</Fit><Arrow w={14} h={31} c={ORANGE} ml={11} />
            <Fit w={101} size={44} ml={18} color={PURPLE}>J:14.37</Fit><Arrow up w={14} h={31} c={PURPLE} ml={11} />
          </Legend>
          <Panel $h={119}>
            <Mark $x={601} $y={6}><Fit w={37} size={32} color="#ccc">80</Fit></Mark>
            <Mark $x={601} $y={28}><Fit w={37} size={32} color="#ccc">50</Fit></Mark>
            <Mark $x={601} $y={57}><Fit w={37} size={32} color="#ccc">20</Fit></Mark>
            <Plot width="643" height="119" viewBox="29 194 1528 357" preserveAspectRatio="none">
              {[291, 376, 461].map(y => <path key={y} d={`M31 ${y}H1553`} stroke="#dedede" strokeWidth="1.500" strokeDasharray="12 5" vectorEffect="non-scaling-stroke" />)}
              <Lines data={kdjLines} />
            </Plot>
            <Mark $x={3} $y={3}><Fit w={108} size={42} color="#8a8a8a">113.95</Fit></Mark>
            <Mark $x={3} $y={75}><Fit w={103} size={42} color="#8a8a8a">-11.83</Fit></Mark>
          </Panel>
          <Ticks />
        </Left>

        <Right>
          <svg width="375" height="385" viewBox="42 42 1125 1155">
            <rect x="44" y="45" width="1121" height="1149" fill="none" stroke="#ccc" strokeWidth="5" />
            <polygon points={trapped} fill="#5bb943" />
            <polygon points={profit} fill="#e84848" />
            <circle cx="540" cy="1044" r="114" fill="rgba(0,0,0,.05)" />
            <path d="M519 993L572 1044L519 1094" fill="none" stroke={GREY} strokeWidth="8" />
            <circle cx="1107" cy="1044" r="114" fill="rgba(255,110,50,.1)" />
            <path d="M1102 994H1056V1037M1056 994L1098 1033M1112 1094H1159V1050M1159 1094L1116 1054" fill="none" stroke="#e05a10" strokeWidth="9" />
          </svg>
          <KeyRow>
            <Swatch $c="#5bb943" $ml={1} /><Fit w={63} size={33} ml={11} color={GREY}>套牢</Fit>
            <Swatch $c="#e84848" $ml={49} /><Fit w={62} size={33} ml={12} color={GREY}>获利</Fit>
          </KeyRow>
          <Stat $h={42}><Fit w={129} size={33} color={GREY}>获利比例</Fit><Fit w={109} size={36} weight={500} color="#333">59.24%</Fit></Stat>
          <Stat $h={52}><Fit w={129} size={33} color={GREY}>平均成本</Fit><Fit w={79} size={36} weight={500} color="#333">12.89</Fit></Stat>
          <Segment>
            <SegItem $on><Fit w={145} size={37} weight={500}>90%筹码</Fit></SegItem>
            <SegItem><Fit w={141} size={37} color={GREY}>70%筹码</Fit></SegItem>
          </Segment>
          <Stat $h={47}><Fit w={129} size={33} color={GREY}>价格区间</Fit><Fit w={170} size={36} weight={500} color="#333">11.22-13.80</Fit></Stat>
          <Stat $h={49}><Fit w={96} size={33} color={GREY}>集中度</Fit><Fit w={107} size={36} weight={500} color="#333">10.33%</Fit></Stat>
          <Stat $h={49}>
            <Lbl>
              <Fit w={62} size={33} color={GREY}>说明</Fit>
              <NavIcon $ml={15} width="34" height="34" viewBox="0 0 34 34"><circle cx="17" cy="17" r="16.500" fill="#ccc" /><circle cx="17" cy="9.500" r="2" fill="#fff" /><path d="M17 14V25" stroke="#fff" strokeWidth="4" strokeLinecap="round" /></NavIcon>
            </Lbl>
            <Fit w={182} size={36} weight={500} color="#333">2026-02-04</Fit>
          </Stat>
        </Right>
      </Main>

      <Dock>
        <IndexBox>
          <IndexTop><Up /><Fit w={154} size={46} color="#e03232">4102.20</Fit></IndexTop>
          <IndexRow><Fit w={76} size={40} color={GREY}>上证</Fit><Fit w={115} size={43} ml={56} color="#e03232">0.85%</Fit></IndexRow>
        </IndexBox>
        <Trade><Fit w={167} size={42} weight={700} color="#fffbe8">开户交易</Fit></Trade>
        <Action $w={76} $ml={78}>
          <svg width="62" height="62" viewBox="0 0 62 62">
            <path d="M42 2.500H9Q2.500 2.500 2.500 9V53Q2.500 59.500 9 59.500H52Q59.500 59.500 59.500 52V18" fill="none" stroke={GREY} strokeWidth="3.500" />
            <path d="M21 41L24 32L49 9L53 13L28 37zM51 7L55 3Q58 1 60 4Q61 6 59 8L55 11z" fill={GREY} />
          </svg>
          <Fit w={76} size={39} color={GREY}>发帖</Fit>
        </Action>
        <Action $w={76} $ml={65}>
          <svg width="60" height="62" viewBox="0 0 60 62">
            <g fill="none" stroke={GREY} strokeWidth="3"><rect x="3" y="4" width="24" height="24" rx="4" /><rect x="3" y="34" width="24" height="24" rx="4" /><rect x="33" y="34" width="24" height="24" rx="4" /><path d="M43 4Q45 2 47 4L56.500 14.500Q58 16.500 56.500 18.500L47 28.500Q45 30.500 43 28.500L33.500 18.500Q32 16.500 33.500 14.500z" /></g>
          </svg>
          <Fit w={76} size={39} color={GREY}>功能</Fit>
        </Action>
        <Action $w={116} $ml={45}>
          <svg width="62" height="62" viewBox="0 0 62 62">
            <circle cx="31" cy="31" r="29.500" fill="none" stroke={GREY} strokeWidth="3" />
            {[18, 31, 44].map(x => <circle key={x} cx={x} cy="31" r="3.500" fill={GREY} />)}
          </svg>
          <Fit w={116} size={39} color={GREY}>设自选</Fit>
        </Action>
      </Dock>

      <SystemNav>
        <NavIcon $ml={0} width="46" height="38" viewBox="0 0 46 38"><path d="M2.500 4H43.500M2.500 19H43.500M2.500 34H43.500" stroke="#909090" strokeWidth="5.500" strokeLinecap="round" /></NavIcon>
        <NavIcon $ml={188} width="58" height="44" viewBox="0 0 58 44"><g fill="none" stroke="#909090" strokeWidth="5" strokeLinecap="round" strokeLinejoin="round"><path d="M3 22L29 3L55 22" /><path d="M11 27V37Q11 40 14 40H44Q47 40 47 37V27" /></g></NavIcon>
        <NavIcon $ml={187} width="48" height="44" viewBox="0 0 48 44"><g fill="none" stroke="#909090" strokeWidth="5" strokeLinecap="round" strokeLinejoin="round"><path d="M13 3L3 9.500H41Q45 9.500 45 13V36Q45 40 41 40H12" /></g></NavIcon>
      </SystemNav>
    </Page>
  );
}
